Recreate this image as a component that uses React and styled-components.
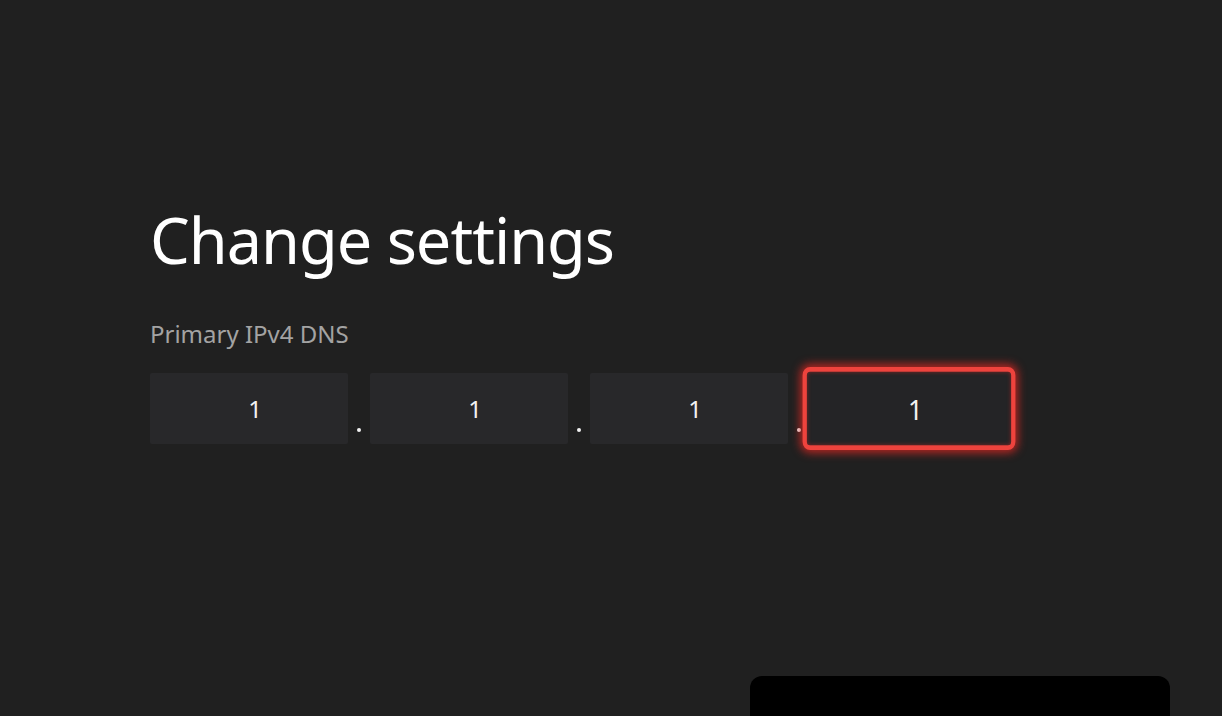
import React from 'react';
import styled, { createGlobalStyle } from 'styled-components';

const GlobalStyle = createGlobalStyle`
  html, body {
    margin: 0;
    padding: 0;
    background: #202020;
  }
  body {
    font-family: "Noto Sans", "Open Sans", sans-serif;
    overflow: hidden;
  }
`;

const octets = ['1', '1', '1', '1'];
const FOCUSED = 3;

const App = () => {
  return (
    <Root>
      <GlobalStyle />
      <Content>
        <Title>Change settings</Title>
        <Label>Primary IPv4 DNS</Label>
        <FieldRow>
          {octets.map((value, i) => (
            <React.Fragment key={i}>
              {i > 0 && (
                <Separator>
                  <Dot />
                </Separator>
              )}
              <Field $focused={i === FOCUSED}>{value}</Field>
            </React.Fragment>
          ))}
        </FieldRow>
      </Content>
      <Footer>
        <Panel />
      </Footer>
    </Root>
  );
};

const Root = styled.div`
  width: 1222px;
  height: 716px;
  display: flex;
  flex-direction: column;
  background: #202020;
  overflow: hidden;
`;

const Content = styled.div`
  flex: 1;
  display: flex;
  flex-direction: column;
  padding: 200px 0 0 150px;
`;

const Title = styled.h1`
  margin: 0;
  font-weight: 400;
  font-size: 63px;
  line-height: 80px;
  color: #ffffff;
  letter-spacing: -1px;
`;

const Label = styled.div`
  margin-top: 38px;
  font-size: 24px;
  line-height: 32px;
  color: #a3a3a3;
`;

const FieldRow = styled.div`
  display: flex;
  align-items: stretch;
  margin-top: 23px;
`;

const Field = styled.div`
  width: 198px;
  height: 71px;
  box-sizing: border-box;
  display: flex;
  align-items: center;
  justify-content: center;
  padding-left: 12px;
  font-size: 24px;
  color: #f2f2f2;
  background: ${(p) => (p.$focused ? '#242426' : '#28282a')};
  border-radius: ${(p) => (p.$focused ? '7px' : '2px')};
  border: ${(p) => (p.$focused ? '4px solid #ee433d' : 'none')};
  box-shadow: ${(p) =>
    p.$focused ? '0 0 8px 2px rgba(230, 40, 35, 0.75), inset 0 0 4px rgba(230, 40, 35, 0.5)' : 'none'};
  transform: ${(p) => (p.$focused ? 'scale(1.075, 1.17)' : 'none')};
  position: relative;
  z-index: ${(p) => (p.$focused ? 1 : 0)};
`;

const Separator = styled.div`
  width: 22px;
  display: flex;
  justify-content: center;
  align-items: flex-end;
  padding-bottom: 12px;
  box-sizing: border-box;
`;

const Dot = styled.span`
  width: 4px;
  height: 4px;
  border-radius: 50%;
  background: #f0f0f0;
`;

const Footer = styled.div`
  height: 40px;
  display: flex;
  justify-content: flex-end;
  padding-right: 52px;
`;

const Panel = styled.div`
  width: 420px;
  height: 60px;
  background: #000000;
  border-radius: 12px 12px 0 0;
`;

export default App;
